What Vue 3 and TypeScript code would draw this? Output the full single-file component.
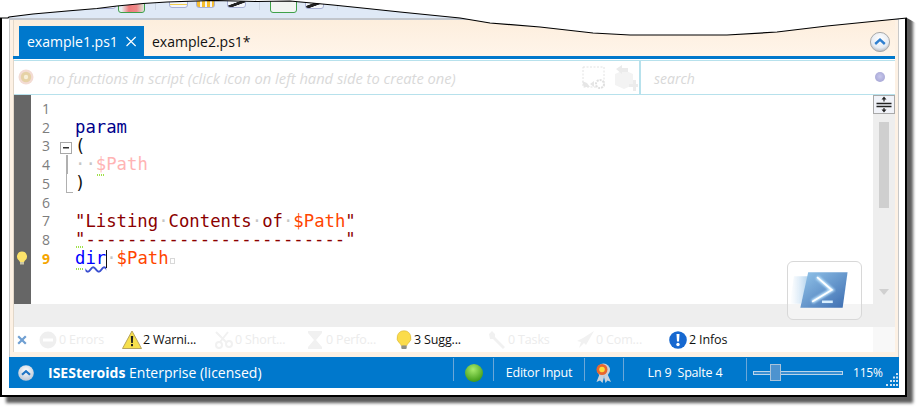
<script setup lang="ts">
interface Stub { w: number; h: number; ml: number; kind: string }
const stubs: Stub[] = [
  { ml: 88, w: 19, h: 9, kind: 'plain' },
  { ml: 2, w: 27, h: 13, kind: 'green red' },
  { ml: 10, w: 1, h: 10, kind: 'sep' },
  { ml: 13, w: 19, h: 8, kind: 'plain yellow' },
  { ml: 8, w: 19, h: 8, kind: 'plain dots' },
  { ml: 12, w: 19, h: 8, kind: 'plain dark' },
  { ml: 13, w: 1, h: 10, kind: 'sep' },
  { ml: 10, w: 27, h: 13, kind: 'green' },
  { ml: 8, w: 19, h: 9, kind: 'plain dark' },
  { ml: 13, w: 1, h: 10, kind: 'sep' },
]
interface Problem { id: string; label: string; on: boolean; width: number }
const problems: Problem[] = [
  { id: 'err', label: '0 Errors', on: false, width: 84 },
  { id: 'warn', label: '2 Warni...', on: true, width: 92 },
  { id: 'cut', label: '0 Short...', on: false, width: 91 },
  { id: 'time', label: '0 Perfo...', on: false, width: 90 },
  { id: 'bulb', label: '3 Sugg...', on: true, width: 92 },
  { id: 'tool', label: '0 Tasks', on: false, width: 88 },
  { id: 'plane', label: '0 Com...', on: false, width: 93 },
  { id: 'info', label: '2 Infos', on: true, width: 90 },
]
const curve = '0,18 8,18 9,17 33,14 67,11 97,8.5 117,6 143,3.5 167,2 213,0.5 257,1.5 290,1 333,5 367,8.5 400,12 460,18 490,23 540,27 593,33 630,35 727,35 777,32 827,26 877,21 907,18'
</script>

<template>
  <div class="page">
    <div class="frame">
      <div class="toolbar">
        <span
          v-for="(s, i) in stubs"
          :key="i"
          class="stub"
          :class="s.kind"
          :style="{ width: s.w + 'px', height: s.h + 'px', marginLeft: s.ml + 'px' }"
        ></span>
      </div>
      <div class="body">
        <div class="content">
          <div class="tabstrip">
            <div class="tab active">
              <span>example1.ps1</span>
              <svg width="13" height="13" viewBox="0 0 13 13"><path d="M.7 .7l11.600 11.600M12.300 .7L.7 12.300" stroke="#fff" stroke-width="1.500" fill="none" /></svg>
            </div>
            <div class="tab">example2.ps1*</div>
            <svg class="collapse" width="22" height="22" viewBox="0 0 22 22">
              <defs>
                <radialGradient id="ball" cx="50%" cy="35%" r="65%"><stop offset="0" stop-color="#fff" /><stop offset="0.7" stop-color="#e6ebf2" /><stop offset="1" stop-color="#b4b8c0" /></radialGradient>
              </defs>
              <circle cx="11" cy="11" r="9.600" fill="url(#ball)" stroke="#a9a9a9" />
              <path d="M6.200 13l4.800-4.400 4.800 4.400" fill="none" stroke="#2f7fd0" stroke-width="2.400" />
            </svg>
          </div>
          <div class="blueline"></div>
          <div class="funcrow">
            <div class="funcmain">
              <svg class="cookie" width="16" height="16" viewBox="0 0 16 16">
                <circle cx="8" cy="8" r="7.500" fill="#f3dcd4" />
                <circle cx="8" cy="8" r="5.200" fill="#e6d2a6" />
                <circle cx="8" cy="8" r="2.200" fill="#f7efd8" />
              </svg>
              <span class="functext">no functions in script (click icon on left hand side to create one)</span>
              <svg class="ghost" width="24" height="24" viewBox="0 0 24 24">
                <rect x="1" y="1" width="21" height="20" fill="none" stroke="#e2e2e2" stroke-dasharray="2 1.500" />
                <path d="M0 15l5 2 3 4H2zM8 18l4-3v6z" fill="#e6e6e6" />
                <circle cx="18" cy="18" r="4" fill="#fff" stroke="#e0e0e0" stroke-width="2" stroke-dasharray="2 1" />
              </svg>
              <svg class="ghost second" width="24" height="26" viewBox="0 0 24 26">
                <path d="M1 9l9-4 9 4v11l-9 4-9-4z" fill="#f3f3f3" />
                <path d="M2 4l6-4v3h6v4H8v2z" fill="#ebebeb" />
                <path d="M15 19h4v-4h3v4h2v3h-2v4h-3v-4h-4z" fill="#ececec" />
              </svg>
            </div>
            <div class="funcsearch">
              <span class="searchtext">search</span>
              <span class="searchdot"></span>
            </div>
          </div>
          <div class="editorwrap">
            <div class="editorcol">
              <div class="editor">
                <div class="gutter">
                  <svg class="gbulb" width="12" height="14" viewBox="0 0 12 14">
                    <path d="M6 .5a5 5 0 0 0-3 9c.6.5.8 1 .8 1.600h4.400c0-.6.2-1.100.8-1.600a5 5 0 0 0-3-9z" fill="#fde36a" />
                    <rect x="4" y="11" width="4" height="2.500" fill="#c9c6a8" />
                  </svg>
                </div>
                <div class="lines">
                  <div class="line"><span class="num">1</span><span class="fold"></span><code class="code"></code></div>
                  <div class="line"><span class="num">2</span><span class="fold"></span><code class="code kw">param</code></div>
                  <div class="line"><span class="num">3</span><span class="fold"><span class="foldbox"></span></span><code class="code">(</code></div>
                  <div class="line"><span class="num">4</span><span class="fold"><span class="foldbar"></span></span><code class="code"><span class="dot">··</span><span class="anchor faint">$<i class="hint low"></i></span><span class="faint">Path</span></code></div>
                  <div class="line"><span class="num">5</span><span class="fold"><span class="foldend"></span></span><code class="code">)</code></div>
                  <div class="line"><span class="num">6</span><span class="fold"></span><code class="code"></code></div>
                  <div class="line"><span class="num">7</span><span class="fold"></span><code class="code str">"Listing<span class="dot">·</span>Contents<span class="dot">·</span>of<span class="dot">·</span><span class="var">$Path</span>"</code></div>
                  <div class="line"><span class="num">8</span><span class="fold"></span><code class="code str">"-------------------------"</code></div>
                  <div class="line"><span class="num cur">9</span><span class="fold"></span><code class="code"><span class="anchor cmd">d<i class="hint top"></i><i class="hint low"></i></span><span class="cmd wavy">ir</span><i class="caret"></i><span class="dot">·</span><span class="var">$Path</span><span class="eol"></span></code></div>
                </div>
              </div>
              <div class="band"></div>
              <div class="badge">
                <svg class="pslogo" width="64" height="44" viewBox="0 0 64 44">
                  <defs>
                    <linearGradient id="psfill" x1="0" y1="0" x2="1" y2="1"><stop offset="0" stop-color="#93c5ea" /><stop offset="1" stop-color="#3c6cb0" /></linearGradient>
                    <linearGradient id="psfade" x1="0" y1="0" x2="1" y2="0"><stop offset="0" stop-color="#cfe4f6" stop-opacity="0" /><stop offset="1" stop-color="#a9cdea" /></linearGradient>
                    <filter id="soft" x="-20%" y="-20%" width="140%" height="140%"><feGaussianBlur stdDeviation="1" /></filter>
                    <filter id="edge" x="-5%" y="-5%" width="110%" height="110%"><feGaussianBlur stdDeviation="0.4" /></filter>
                  </defs>
                  <path d="M6 9h16l-9 28H2z" fill="url(#psfade)" filter="url(#edge)" />
                  <path d="M20.500 5H60.500L55.500 41H12.500z" fill="url(#psfill)" filter="url(#edge)" />
                  <path d="M29.500 10l15 13-20 12" fill="none" stroke="#c5e8ff" stroke-width="4" filter="url(#soft)" />
                  <path d="M29.500 10l15 13-20 12" fill="none" stroke="#fff" stroke-width="1.800" />
                  <path d="M34.500 35h11" stroke="#d8efff" stroke-width="2.600" />
                </svg>
              </div>
            </div>
            <div class="scrollbar">
              <div class="split">
                <svg width="20" height="17" viewBox="0 0 20 17">
                  <path d="M2.500 7.500h15M2.500 10.500h15" stroke="#222" stroke-width="1.400" />
                  <path d="M10 5.500V2M10 12v3" stroke="#222" stroke-width="1.200" />
                  <path d="M7.500 3.500L10 .5l2.500 3zM7.500 13.500L10 16.500l2.500-3z" fill="#222" />
                </svg>
              </div>
              <div class="thumb"></div>
              <div class="arrow"></div>
            </div>
          </div>
          <div class="problemrow">
            <div class="problems">
              <svg class="closex" width="10" height="10" viewBox="0 0 10 10"><path d="M1.200 1.200l7.600 7.600M8.800 1.200L1.200 8.800" stroke="#6f9fd2" stroke-width="2.200" /></svg>
              <div
                v-for="p in problems"
                :key="p.id"
                class="prob"
                :class="[{ on: p.on }, 'p-' + p.id]"
                :style="{ width: p.width + 'px' }"
              >
                <svg class="pico" width="20" height="20" viewBox="0 0 20 20">
                  <template v-if="p.id === 'err'">
                    <circle cx="10" cy="10" r="8.500" fill="#efefef" />
                    <rect x="5" y="8.500" width="10" height="3" fill="#fff" />
                  </template>
                  <template v-else-if="p.id === 'warn'">
                    <path d="M10 1L19.500 18.500H.5z" fill="#f6e04d" stroke="#b8a45c" stroke-linejoin="round" />
                    <path d="M8.800 6h2.400l-.4 7H9.200z" fill="#222" />
                    <rect x="9" y="14" width="2" height="2.200" fill="#222" />
                  </template>
                  <template v-else-if="p.id === 'cut'">
                    <path d="M2 2l11 11M14 2L6 12" stroke="#f1f1f1" stroke-width="2" fill="none" />
                    <circle cx="15" cy="14" r="3" fill="none" stroke="#f1f1f1" stroke-width="2" />
                    <circle cx="5" cy="15" r="3" fill="none" stroke="#f1f1f1" stroke-width="2" />
                  </template>
                  <template v-else-if="p.id === 'time'">
                    <path d="M3 1h14v2l-6 7 6 7v2H3v-2l6-7-6-7z" fill="#f1f1f1" />
                  </template>
                  <template v-else-if="p.id === 'bulb'">
                    <path d="M10 .8a7 7 0 0 0-4.300 12.500c.9.800 1.300 1.500 1.300 2.200h6c0-.7.400-1.400 1.300-2.200A7 7 0 0 0 10 .8z" fill="#fbdc4b" stroke="#d8b637" stroke-width="0.600" />
                    <rect x="7.300" y="15.500" width="5.400" height="3.500" rx="1" fill="#8f8f86" />
                  </template>
                  <template v-else-if="p.id === 'tool'">
                    <path d="M2 4l3-3 3 3v3l10 10-2 2L6 9H3z" fill="#f1f1f1" />
                  </template>
                  <template v-else-if="p.id === 'plane'">
                    <path d="M19 1L8 8l-6 3 4 1-2 6 5-5 2 2z" fill="#f1f1f1" />
                  </template>
                  <template v-else>
                    <circle cx="10" cy="10" r="8.800" fill="#1668d0" />
                    <path d="M8.500 4h3l-.5 7.500H9z" fill="#fff" />
                    <circle cx="10" cy="14.500" r="1.700" fill="#fff" />
                  </template>
                </svg>
                <span>{{ p.label }}</span>
              </div>
            </div>
            <div class="probend"></div>
          </div>
        </div>
      </div>
      <div class="status">
        <div class="stleft">
          <svg class="stup" width="18" height="18" viewBox="0 0 18 18">
            <defs>
              <radialGradient id="ball2" cx="50%" cy="35%" r="65%"><stop offset="0" stop-color="#fff" /><stop offset="1" stop-color="#b9c6d6" /></radialGradient>
            </defs>
            <circle cx="9" cy="9" r="7.800" fill="url(#ball2)" />
            <path d="M5 10.800l4-3.600 4 3.600" fill="none" stroke="#1f74c4" stroke-width="2.200" />
          </svg>
          <span><b>ISESteroids</b> Enterprise (licensed)</span>
        </div>
        <div class="cell c-green">
          <svg width="20" height="20" viewBox="0 0 20 20">
            <defs>
              <radialGradient id="led" cx="45%" cy="30%" r="70%"><stop offset="0" stop-color="#a8ec6c" /><stop offset="1" stop-color="#3f9a16" /></radialGradient>
            </defs>
            <circle cx="10" cy="10" r="9" fill="url(#led)" />
          </svg>
        </div>
        <div class="cell c-input">Editor Input</div>
        <div class="cell c-ribbon">
          <svg width="18" height="20" viewBox="0 0 18 20">
            <path d="M5 10L1.500 19l3.500-1.500L7.500 20 9.500 12zM12 10l4 9-3.500-1.500L10.500 20 8.500 12z" fill="#c9d3dd" />
            <circle cx="8.500" cy="7" r="6.500" fill="#c9cfd6" />
            <circle cx="7" cy="6.500" r="5.500" fill="#e8662e" />
            <circle cx="7" cy="6.500" r="2.800" fill="#fcdc3a" />
          </svg>
        </div>
        <div class="cell c-pos">Ln 9&nbsp;&nbsp;Spalte 4</div>
        <div class="cell c-zoom">
          <div class="slider"><span class="sliderthumb"></span></div>
          <span class="pct">115%</span>
          <svg class="grip" width="14" height="15" viewBox="0 0 14 15">
            <path d="M11 1h2v2h-2zM8 4.500h2v2H8zM11 4.500h2v2h-2zM5 8h2v2H5zM8 8h2v2H8zM11 8h2v2h-2zM1 12h2v2H1zM5 12h2v2H5zM8 12h2v2H8zM11 12h2v2h-2z" fill="#cfe2f3" />
          </svg>
        </div>
      </div>
    </div>
    <svg class="tear" width="923" height="40" viewBox="0 0 923 40">
      <polygon :points="'0,0 ' + curve + ' 923,27 923,0'" fill="#fff" />
      <polyline :points="curve" fill="none" stroke="#000" stroke-width="1.200" />
    </svg>
  </div>
</template>

<style>
html, body { margin: 0; background: #fff; }
</style>

<style scoped>
.page {
  position: relative;
  width: 923px;
  height: 412px;
  overflow: hidden;
  background: #fff;
  font-family: "Open Sans", "Noto Sans", sans-serif;
}
.frame {
  box-sizing: border-box;
  width: 907px;
  height: 397px;
  display: flex;
  flex-direction: column;
  padding: 0 6px 7px 7px;
  background: #fff;
  border: solid #000;
  border-width: 0 2px 2px 2px;
  box-shadow: 6px 6px 3px #5c5c5c;
}
.toolbar {
  flex: none;
  height: 18px;
  display: flex;
  align-items: flex-start;
  background: #dfe9f6;
  border-bottom: 2px solid #c2c6cc;
}
.stub { display: block; box-sizing: border-box; flex: none; position: relative; }
.stub.plain { background: #f3f6fb; border: 1px solid #a9b1d6; border-radius: 0 0 3px 3px; }
.stub.green { background: #f2f5f2; border: 1px solid #3fa14a; border-radius: 0 0 3px 3px; }
.stub.sep { background: #ccd6e4; }
.stub.red { background: linear-gradient(90deg, #e8eef0 10%, #ef7a7a 40%, #e88 70%, #d9e6d9); }
.stub.yellow { background: linear-gradient(#f3f6fb 45%, #f5cf4e 45%, #f5cf4e 75%, #f3f6fb 75%); }
.stub.dots { background: repeating-linear-gradient(90deg, #f7bf2f 0 3px, #f3f6fb 3px 5px); }
.stub.dark { background: linear-gradient(160deg, #f3f6fb 35%, #222 40%, #222 60%, #f3f6fb 65%); }
.body {
  flex: none;
  height: 337px;
  box-sizing: border-box;
  padding: 0 3px 5px 3px;
  background: #fdf1e4;
  border: solid #c9c9c9;
  border-width: 0 1px;
}
.content {
  height: 100%;
  display: flex;
  flex-direction: column;
  border-left: 1px solid #e2d7c9;
}
.tabstrip {
  flex: none;
  height: 36px;
  display: flex;
  align-items: flex-end;
  padding-left: 5px;
  background: linear-gradient(#fdeedd, #fff5ea);
}
.tab {
  height: 30px;
  display: flex;
  align-items: center;
  gap: 8px;
  padding: 1px 8px 0;
  font-size: 14px;
  color: #111;
  box-sizing: border-box;
}
.tab.active {
  width: 125px;
  background: #0078cc;
  color: #fff;
}
.collapse { margin: 0 4px 3px auto; align-self: flex-end; }
.blueline { flex: none; height: 3px; margin-left: -1px; background: #0078cc; }
.funcrow {
  flex: none;
  height: 36px;
  box-sizing: border-box;
  display: flex;
  background: #fff;
  border-top: 1px solid #fff;
}
.funcmain, .funcsearch {
  box-sizing: border-box;
  height: 35px;
  display: flex;
  align-items: center;
  border: solid #b7e1ec;
  border-width: 1px 0;
}
.funcmain { width: 627px; border-right: 2px solid #b7e1ec; padding-left: 4px; }
.cookie { flex: none; margin-bottom: 2px; }
.functext {
  margin-left: 14px;
  padding-top: 1px;
  font-size: 14.7px;
  font-style: italic;
  color: #d9d9d9;
  white-space: nowrap;
}
.ghost { flex: none; margin-left: auto; margin-right: 8px; }
.ghost.second { margin-left: 0; margin-right: 1px; }
.funcsearch { flex: 1; padding-left: 13px; padding-right: 10px; justify-content: space-between; }
.searchtext { font-size: 14px; padding-top: 1px; font-style: italic; color: #d8d8d8; }
.searchdot {
  width: 10px;
  height: 10px;
  border-radius: 50%;
  background: radial-gradient(circle at 50% 45%, #c8c8ec, #9d9dcf);
  margin-bottom: 2px;
}
.editorwrap { flex: none; height: 232px; display: flex; position: relative; }
.editorcol { flex: 1; display: flex; flex-direction: column; min-width: 0; }
.editor { flex: none; height: 209px; display: flex; background: #fff; }
.gutter { flex: none; width: 17px; background: #666; display: flex; justify-content: center; align-items: flex-start; }
.gbulb { margin: 156px 2px 0 0; }
.lines { flex: 1; padding-top: 4px; }
.line { height: 18.75px; display: flex; align-items: center; position: relative; }
.num {
  flex: none;
  width: 19px;
  text-align: right;
  font-size: 14px;
  color: #7d7d7d;
  font-family: "Open Sans", sans-serif;
}
.num.cur { color: #f5a500; font-weight: 700; }
.fold { flex: none; width: 25px; height: 100%; position: relative; }
.foldbox {
  position: absolute;
  left: 10px;
  top: 5px;
  width: 12px;
  height: 12px;
  box-sizing: border-box;
  border: 1px solid #a8a8a8;
  background: linear-gradient(#333, #333) center / 6px 1.500px no-repeat #fff;
}
.foldbar { position: absolute; left: 16px; top: 0; bottom: 0; width: 1.500px; background: #b0b0b0; }
.foldend {
  position: absolute;
  left: 16px;
  top: 0;
  height: 18px;
  width: 6px;
  border-left: 1.500px solid #b0b0b0;
  border-bottom: 1.500px solid #b0b0b0;
}
.code {
  font-family: "DejaVu Sans Mono", "Liberation Mono", monospace;
  font-size: 17.28px;
  line-height: 18.75px;
  white-space: pre;
  color: #111;
}
.kw { color: #00008b; }
.str { color: #8b0000; }
.var { color: #ff4500; }
.faint { color: #ffb4b4; }
.cmd { color: #0000ff; }
.dot { color: #c6c6c6; }
.wavy { text-decoration: underline wavy #3a4fd0 1.500px; text-underline-offset: 2px; }
.anchor { position: relative; }
.hint {
  position: absolute;
  left: 1px;
  width: 8px;
  height: 2px;
  background: repeating-linear-gradient(90deg, #9fe04a 0 1px, transparent 1px 2px);
}
.hint.top { top: -2px; }
.hint.low { bottom: -2px; }
.caret {
  display: inline-block;
  width: 1px;
  height: 18px;
  margin-right: -1px;
  vertical-align: -4px;
  background: #111;
}
.eol {
  display: inline-block;
  box-sizing: border-box;
  width: 5px;
  height: 6px;
  margin-left: 1px;
  border: 1px solid #d8d8d8;
}
.band { flex: 1; background: #eee; }
.badge {
  position: absolute;
  left: 773px;
  top: 166px;
  width: 75px;
  height: 59px;
  box-sizing: border-box;
  border: 1px solid #d8d8d8;
  border-radius: 6px;
  background: rgba(255, 255, 255, 0.35);
  display: flex;
  align-items: center;
  justify-content: center;
}
.pslogo { margin: 0 10px 3px 0; }
.scrollbar {
  flex: none;
  width: 22px;
  background: #eee;
  display: flex;
  flex-direction: column;
  align-items: center;
}
.split {
  box-sizing: border-box;
  width: 22px;
  height: 19px;
  display: flex;
  align-items: center;
  justify-content: center;
  background: #f1f3f9;
  border: 1px solid #a9a9a9;
}
.thumb { width: 10px; height: 86px; margin-top: 8px; background: #cfcfcf; }
.arrow {
  margin-top: 81px;
  width: 0;
  height: 0;
  border: solid transparent;
  border-width: 6px 5.500px 0;
  border-top-color: #d0d0d0;
}
.problemrow { flex: none; height: 25px; display: flex; }
.problems {
  flex: 1;
  display: flex;
  align-items: center;
  background: #fff;
  padding-left: 3px;
  min-width: 0;
}
.closex { flex: none; margin-right: 11px; }
.prob {
  flex: none;
  display: flex;
  align-items: center;
  gap: 1px;
  font-size: 12.5px;
  letter-spacing: -0.15px;
  color: #ececec;
  white-space: nowrap;
}
.prob.on { color: #111; }
.pico { flex: none; }
.p-bulb .pico { margin: 0 -1px; }
.probend { flex: none; width: 22px; background: #f8f8f8; }
.status {
  flex: none;
  height: 31px;
  display: flex;
  align-items: center;
  background: #0078cc;
  color: #fff;
  font-size: 14px;
}
.stleft {
  flex: 1;
  min-width: 0;
  display: flex;
  align-items: center;
  gap: 13px;
  padding-left: 8px;
  white-space: nowrap;
}
.stleft b { font-weight: 700; }
.cell {
  flex: none;
  box-sizing: border-box;
  height: 23px;
  margin-bottom: 7px;
  display: flex;
  align-items: center;
  justify-content: center;
  border-left: 1px solid #6ba7d8;
  font-size: 12.5px;
  letter-spacing: -0.2px;
  white-space: nowrap;
}
.cell > * { margin-top: 7px; }
.cell.c-input, .cell.c-pos { padding-top: 7px; }
.c-green { width: 40px; }
.c-input { width: 91px; }
.c-ribbon { width: 39px; }
.c-pos { width: 123px; }
.c-zoom { width: 153px; justify-content: flex-start; padding-left: 6px; position: relative; }
.slider {
  position: relative;
  width: 90px;
  height: 4px;
  box-sizing: border-box;
  border: 1px solid #b9d4ea;
  background: #3a8fd2;
}
.sliderthumb {
  position: absolute;
  left: 16px;
  top: -8px;
  width: 11px;
  height: 17px;
  box-sizing: border-box;
  border: 1px solid #a9c3da;
  background: #4d93cf;
}
.pct { margin-left: 10px; font-size: 12px; }
.grip { position: absolute; right: 0; top: 7px; margin-top: 7px; }
.tear { position: absolute; left: 0; top: 0; pointer-events: none; }
</style>
